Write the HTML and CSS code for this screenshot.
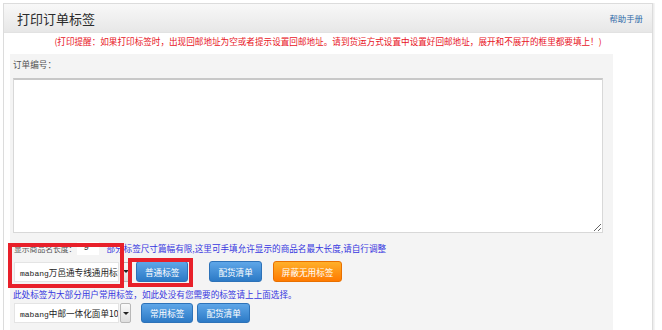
FILE: index.html
```html
<!DOCTYPE html>
<html lang="zh-CN">
<head>
    <meta charset="UTF-8">
    <meta name="viewport" content="width=device-width, initial-scale=1.0">
    <link rel="stylesheet" href="styles.css">
    <title>打印订单标签</title>
</head>
<body>
    <div class="panel">
        <div class="panel-head">
            <h2 class="panel-title">打印订单标签</h2>
            <a class="help-link" href="#">帮助手册</a>
        </div>
        <p class="notice">(打印提醒：如果打印标签时，出现回邮地址为空或者提示设置回邮地址。请到货运方式设置中设置好回邮地址，展开和不展开的框里都要填上！)</p>

        <div class="form-box">
            <div class="field-label">订单编号：</div>
            <textarea class="order-input"></textarea>

            <div class="len-row">
                <span class="len-label">显示商品名长度：</span>
                <input class="len-input" type="text" value="9">
                <span class="hint">部分标签尺寸篇幅有限,这里可手填允许显示的商品名最大长度,请自行调整</span>
            </div>

            <div class="action-row">
                <div class="fake-select">
                    <span class="select-text"><span class="mono">mabang</span>万邑通专线通用标签</span>
                    <span class="select-arrow"><span class="tri"></span></span>
                </div>
                <button class="btn btn-blue btn-first">普通标签</button>
                <button class="btn btn-blue btn-wide-gap">配货清单</button>
                <button class="btn btn-orange">屏蔽无用标签</button>
            </div>

            <p class="hint hint-line">此处标签为大部分用户常用标签，如此处没有您需要的标签请上上面选择。</p>

            <div class="action-row action-row-2">
                <div class="fake-select">
                    <span class="select-text"><span class="mono">mabang</span>中邮一体化面单10x10</span>
                    <span class="select-arrow"><span class="tri"></span></span>
                </div>
                <button class="btn btn-blue btn-common">常用标签</button>
                <button class="btn btn-blue btn-tight">配货清单</button>
            </div>
        </div>
    </div>

    <!-- annotation boxes drawn over the screenshot -->
    <div class="mark mark-select"></div>
    <div class="mark mark-btn"></div>
</body>
</html>
```

FILE: styles.css
```css
* {
    margin: 0;
    padding: 0;
    box-sizing: border-box;
}

body {
    background: #fff;
    font-family: "Noto Sans CJK SC", "Noto Sans", sans-serif;
    font-size: 8.6px;
    color: #444;
    height: 330px;
    overflow: hidden;
}

.panel {
    margin: 3px 0 0 3px;
    width: 650px;
    height: 327px;
    border: 1px solid #dcdcdc;
    border-bottom: none;
    box-shadow: 1px 0 0 #eee, 2px 0 0 #f4f4f4;
}

.panel-head {
    height: 29px;
    display: flex;
    align-items: center;
    justify-content: space-between;
    padding: 0 9px 0 13px;
    background: linear-gradient(#f8f8f8, #e7e7e7);
    border-bottom: 1px solid #e2e2e2;
}

.panel-title {
    font-size: 13px;
    font-weight: 400;
    color: #2b2b2b;
}

.help-link {
    font-size: 8.4px;
    color: #2e6aa8;
    text-decoration: none;
}

.notice {
    text-align: center;
    color: #e8141e;
    line-height: 15px;
    margin: 1px 0 5px;
}

.form-box {
    margin-left: 6px;
    width: 603px;
    height: 277px;
    background: #f4f4f4;
    padding: 3px 0 0 3px;
}

.field-label {
    line-height: 14px;
    color: #555;
}

.order-input {
    display: block;
    margin-top: 7px;
    width: 590px;
    height: 155px;
    border: 1px solid #d8d8d8;
    border-top: 2px solid #c8c8c8;
    background: #fff;
    resize: vertical;
}

.len-row {
    margin-top: 8px;
    height: 14px;
    display: flex;
    align-items: center;
}

.len-label {
    color: #555;
    font-size: 7.8px;
    margin-left: 1px;
}

.len-input {
    width: 22px;
    height: 13px;
    margin: 0 7px 0 1px;
    border: none;
    background: #fff;
    font-family: "Liberation Mono", monospace;
    font-size: 9px;
    padding-left: 6px;
    color: #333;
}

.hint {
    color: #3636e0;
}

.hint-line {
    margin-top: 6px;
    line-height: 12px;
}

.action-row {
    margin-top: 6px;
    height: 21px;
    display: flex;
    align-items: center;
}

.action-row-2 {
    margin-top: 3px;
    height: 20px;
}

.fake-select {
    display: flex;
    height: 20px;
    margin-left: 1px;
}

.select-text {
    width: 105px;
    background: #fff;
    border: 1px solid #e4e4e4;
    padding-left: 5px;
    line-height: 18px;
    white-space: nowrap;
    overflow: hidden;
    color: #222;
}

.mono {
    font-family: "Liberation Mono", monospace;
    font-size: 8px;
}

.select-arrow {
    width: 11px;
    margin-left: 1px;
    border: 1px solid #b8b8b8;
    border-radius: 2px;
    background: linear-gradient(#fafafa, #dedede);
    display: flex;
    align-items: center;
    justify-content: center;
}

.tri {
    width: 0;
    height: 0;
    border-left: 3px solid transparent;
    border-right: 3px solid transparent;
    border-top: 3px solid #222;
}

.btn {
    height: 21px;
    padding: 0 8px;
    border-radius: 3px;
    font-family: inherit;
    font-size: 8.6px;
    color: #fff;
    cursor: pointer;
}

.btn-blue {
    background: linear-gradient(#5ea6e8, #2c7ac6);
    border: 1px solid #2d72b8;
}

.btn-orange {
    background: linear-gradient(#ffb02a, #ff7a00);
    border: 1px solid #e87000;
    margin-left: 11px;
}

.btn-first {
    margin-left: 5px;
}

.btn-wide-gap {
    margin-left: 21px;
}

.btn-common {
    margin-left: 10px;
}

.btn-tight {
    margin-left: 4px;
}

.action-row-2 .btn {
    height: 20px;
}

.mark {
    position: absolute;
    border: 4px solid #e8202a;
}

.mark-select {
    left: 8px;
    top: 243px;
    width: 116px;
    height: 45px;
}

.mark-btn {
    left: 128px;
    top: 258px;
    width: 65px;
    height: 29px;
}
```
